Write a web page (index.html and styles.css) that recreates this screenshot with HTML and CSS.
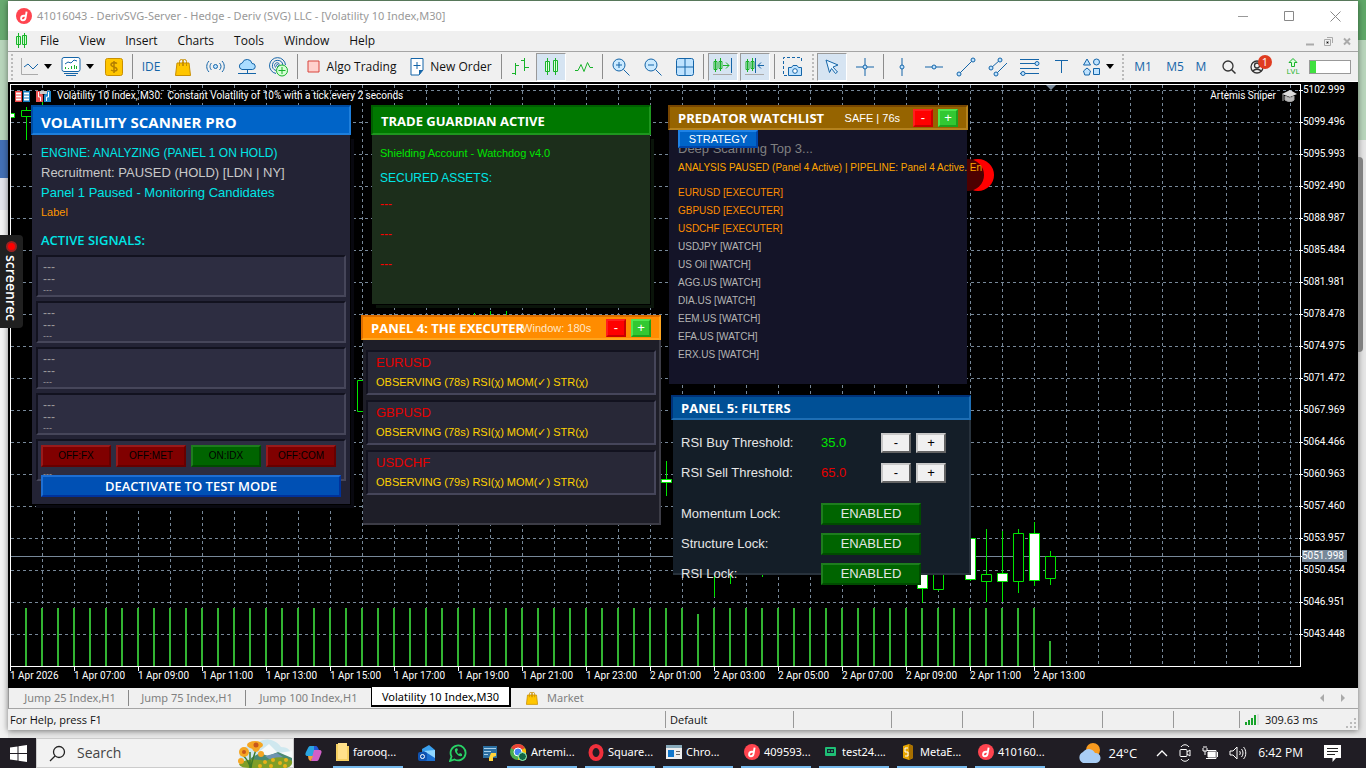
FILE: index.html
```html
<!DOCTYPE html>
<html lang="en">
<head>
<meta charset="utf-8">
<title>41016043 - DerivSVG-Server</title>
<link rel="stylesheet" href="styles.css">
</head>
<body>
<svg class="defs" width="0" height="0" aria-hidden="true">
  <symbol id="deriv" viewBox="0 0 16 16"><circle cx="8" cy="8" r="8" fill="#ff444f"/><path d="M10.600 3.600 9.500 10c-.3 1.500-1.300 2.300-2.600 2.300-1.400 0-2-1-1.800-2.200.2-1.500 1.300-2.400 2.700-2.400h2" fill="none" stroke="#fff" stroke-width="1.900"/></symbol>
  <symbol id="bag" viewBox="0 0 16 18"><path d="M2 5h12l1.500 12.500H.5z" fill="#ffc600" stroke="#c98f00"/><path d="M4.500 8V3.500a2 2 0 0 1 4 0V8M7.500 8V3.500a2 2 0 0 1 4 0V8" fill="none" stroke="#c98f00"/></symbol>
</svg>
<div class="desktop">
  <main class="window">
    <header class="titlebar">
      <svg class="logo" width="16" height="16"><use href="#deriv"/></svg>
      <h1>41016043 - DerivSVG-Server - Hedge - Deriv (SVG) LLC - [Volatility 10 Index,M30]</h1>
      <button aria-label="Minimize"><svg width="11" height="11"><path d="M0 5.500h10" stroke="#999"/></svg></button>
      <button aria-label="Maximize"><svg width="11" height="11"><path d="M.5.500h9v9h-9z" stroke="#888" fill="none"/></svg></button>
      <button aria-label="Close"><svg width="11" height="11"><path d="M.5.500l10 10M10.500.500l-10 10" stroke="#888"/></svg></button>
    </header>
    <nav class="menubar">
      <svg width="13" height="16"><path d="M3.500 0v15M1.500 3.500h4v8h-4zM9.500 0v15M7.500 2.500h4v9h-4z" fill="#cfc" stroke="#18b32a"/></svg>
      <a href="#">File</a><a href="#">View</a><a href="#">Insert</a><a href="#">Charts</a><a href="#">Tools</a><a href="#">Window</a><a href="#">Help</a>
      <div class="mdi">
        <svg width="8" height="9"><path d="M0 7.500h8" stroke="#aaa" stroke-width="2"/></svg>
        <svg width="9" height="9"><path d="M3 .5h5.500V6M.5 2.500h6v6h-6z" fill="none" stroke="#aaa"/><path d="M2.500 4.500h2v2h-2z" stroke="#aaa"/></svg>
        <svg width="8" height="9"><path d="M1 1.500l6 6M7 1.500l-6 6" stroke="#aaa" stroke-width="2"/></svg>
      </div>
    </nav>
    <div class="toolbar">
      <span class="grip"></span>
      <button class="drop" aria-label="Chart type"><svg width="18" height="18"><path d="M.5 0v16.500H17" stroke="#aaa" fill="none"/><path d="M3 9l4-3 5 5 5-5" stroke="#1565a8" fill="none"/></svg><i></i></button>
      <button class="drop" aria-label="Indicators"><svg width="20" height="20"><rect x="1" y=".5" width="18" height="14" rx="2" fill="#fff" stroke="#1565a8"/><path d="M3 16.500h14M5 18.500h10" stroke="#1565a8"/><path d="M4 7l3-2 3 1 3-3 3 1" fill="none" stroke="#1565a8"/><path d="M4.500 12v-2M7.500 12v-1M10.500 12V9M13.500 12V8M15.500 12V9" stroke="#18b32a"/></svg><i></i></button>
      <button class="tool" aria-label="Currency"><svg width="18" height="18"><rect x=".5" y=".5" width="17" height="17" rx="2" fill="#ffc600" stroke="#c98f00"/><path d="M12 5.500C10 4 6 4.500 6 6.800S12 9 12 11.200 8 13.500 6 12M9 3v12" stroke="#b37f00" fill="none" stroke-width="1.500"/></svg></button>
      <span class="sep"></span>
      <button class="tool blue">IDE</button>
      <button class="tool" aria-label="Market"><svg width="16" height="18"><use href="#bag"/></svg></button>
      <button class="tool" aria-label="Signals"><svg width="19" height="13" fill="none" stroke="#1565a8"><path d="M3 1C0 4 0 9 3 12M5.500 3c-2 2-2 5 0 7M16 1c3 3 3 8 0 11M13.500 3c2 2 2 5 0 7"/><circle cx="9.500" cy="6.500" r="2" fill="#bfe3ff"/></svg></button>
      <button class="tool" aria-label="Cloud"><svg width="18" height="16" stroke="#1565a8"><path d="M4 10.500a3.300 3.300 0 0 1 .3-6.500A5 5 0 0 1 14 4.500a3 3 0 0 1 .5 6z" fill="#aaddff"/><path d="M9.500 11v3M0 14.500h18"/></svg></button>
      <button class="tool" aria-label="VPS"><svg width="20" height="20" fill="none" stroke="#1565a8"><path d="M7 16.500A8 8 0 1 1 16.500 8M7 13.500A5.200 5.200 0 1 1 13.800 8M7 10.500a2.500 2.500 0 1 1 3.500-3"/><circle cx="8.500" cy="8.500" r="1"/><circle cx="13" cy="13.500" r="5.500" fill="#d5ffd5" stroke="#18b32a"/><path d="M13 10v7M9.500 13.500h7" stroke="#18b32a"/></svg></button>
      <span class="sep"></span>
      <button class="wide"><svg width="13" height="13"><path d="M1 1h11v11H1z" fill="#ffd0cc" stroke="#d8443c"/></svg>Algo Trading</button>
      <button class="wide order"><svg width="14" height="18"><path d="M1 .5h12V12l-4 5H1z" fill="#fff" stroke="#1565a8"/><path d="M7 4v7M3.500 7.500h7" stroke="#1565a8"/><path d="M13 12H9v5z" fill="#1565a8"/></svg>New Order</button>
      <span class="sep"></span>
      <button class="tool" aria-label="Bar chart"><svg width="18" height="18"><path d="M4.500 5v12M1 15.500h3M5 7.500h3M13.500 0v13M10 2.500h3M14 9.500h4" stroke="#18b32a"/></svg></button>
      <button class="tool on" aria-label="Candlesticks"><svg width="15" height="18"><path d="M3.500 0v17M11.500 0v17M1.500 3.500h4v10h-4zM9.500 2.500h4v11h-4z" fill="#dfd" stroke="#18b32a"/></svg></button>
      <button class="tool" aria-label="Line chart"><svg width="18" height="12"><path d="M0 9.500h3l3-6 3 7 3.500-9 2.500 5h3" fill="none" stroke="#18b32a"/></svg></button>
      <span class="sep"></span>
      <button class="tool" aria-label="Zoom in"><svg width="18" height="18" stroke="#1565a8"><circle cx="7" cy="7" r="6" fill="#cbeaff"/><path d="M11.500 11.500l6 6M7 4v6M4 7h6"/></svg></button>
      <button class="tool" aria-label="Zoom out"><svg width="18" height="18" stroke="#1565a8"><circle cx="7" cy="7" r="6" fill="#cbeaff"/><path d="M11.500 11.500l6 6M4 7h6"/></svg></button>
      <button class="tool" aria-label="Tile"><svg width="18" height="18" stroke="#1565a8"><rect x=".5" y=".5" width="17" height="17" rx="2" fill="#bfe3ff"/><path d="M9 0v18M0 9h18"/></svg></button>
      <span class="sep"></span>
      <button class="tool on" aria-label="Auto scroll"><svg width="20" height="18"><path d="M2.500 1v13M7.500 0v13M1 3.500h3v8H1zM6 3.500h3v7H6zM10 7.500h6M13 4.500l3 3-3 3" fill="none" stroke="#18b32a"/><path d="M18.500 0v15" stroke="#1565a8"/><path d="M0 16.500h19" stroke="#aaa"/></svg></button>
      <button class="tool on" aria-label="Chart shift"><svg width="20" height="18"><path d="M2.500 1v13M7.500 0v13M1 3.500h3v8H1zM6 3.500h3v7H6z" fill="none" stroke="#18b32a"/><path d="M10.500 0v15M19 7.500h-6M16 4.500l-3 3 3 3" fill="none" stroke="#1565a8"/><path d="M0 16.500h19" stroke="#aaa"/></svg></button>
      <span class="sep"></span>
      <button class="tool" aria-label="Screenshot"><svg width="20" height="20" fill="none" stroke="#1565a8"><path d="M4 18.500H.5V.5h18V6" stroke-dasharray="3 2"/><path d="M5.500 10.500h3l1.500-2h4l1.500 2h3v8h-13z" fill="#bfe3ff"/><circle cx="12" cy="14" r="2.300" fill="#fff"/></svg></button>
      <span class="grip"></span>
      <button class="tool on" aria-label="Cursor"><svg width="14" height="16"><path d="M1 1l12 5-5 2 4.500 5-2 1.500-4-5-2 4z" fill="#e3f3ff" stroke="#1565a8"/></svg></button>
      <button class="tool" aria-label="Crosshair"><svg width="18" height="18" stroke="#1565a8"><path d="M9 0v18M0 9h18"/><circle cx="9" cy="9" r="2" fill="#bfe3ff"/></svg></button>
      <span class="sep"></span>
      <button class="tool" aria-label="Vertical line"><svg width="6" height="18" stroke="#1565a8"><path d="M3 0v18"/><circle cx="3" cy="9" r="2" fill="#bfe3ff"/></svg></button>
      <button class="tool" aria-label="Horizontal line"><svg width="18" height="6" stroke="#1565a8"><path d="M0 3h18"/><circle cx="9" cy="3" r="2" fill="#bfe3ff"/></svg></button>
      <button class="tool" aria-label="Trend line"><svg width="20" height="20" stroke="#1565a8" fill="#bfe3ff"><path d="M3 17L17 3"/><circle cx="3" cy="17" r="2"/><circle cx="17" cy="3" r="2"/></svg></button>
      <button class="tool" aria-label="Channel"><svg width="20" height="20" stroke="#1565a8" fill="#bfe3ff"><path d="M3 11l9-8M8 17L19 6"/><circle cx="3" cy="11" r="2"/><circle cx="12" cy="3" r="2"/><circle cx="8" cy="17" r="2"/></svg></button>
      <button class="tool" aria-label="Fibonacci"><svg width="20" height="18" stroke="#1565a8" fill="#bfe3ff"><path d="M0 1.500h19M0 5.500h19M0 10.500h19M0 15.500h19"/><circle cx="17" cy="5.500" r="2"/><circle cx="3" cy="15.500" r="2"/></svg></button>
      <button class="tool" aria-label="Text"><svg width="14" height="14"><path d="M0 .5h13M6.500 0v13" stroke="#1565a8"/></svg></button>
      <button class="drop" aria-label="Shapes"><svg width="18" height="18" stroke="#1565a8" fill="#bfe3ff"><path d="M4 1l3.500 6h-7zM4 10l3.500 3-1.300 4H1.800L.5 13zM10.500 10.500h6v6h-6z"/><circle cx="13.500" cy="4" r="3"/></svg><i></i></button>
      <span class="grip"></span>
      <button class="tool blue">M1</button><button class="tool blue">M5</button><button class="tool blue cut">M</button>
      <button class="tool find" aria-label="Search"><svg width="14" height="14" fill="none" stroke="#333"><circle cx="6" cy="6" r="5" stroke-width="1.300"/><path d="M9.500 9.500l4 4" stroke-width="1.500"/></svg></button>
      <button class="tool account" aria-label="Account"><svg width="14" height="14" fill="none" stroke="#333" stroke-width="1.300"><circle cx="7" cy="7" r="6"/><circle cx="7" cy="5.500" r="2.500"/><path d="M3 11.500c1-3 7-3 8 0"/></svg><b>1</b></button>
      <button class="tool lvl"><svg width="10" height="9"><path d="M5 .5l4 4H6.500v4h-3v-4H1z" fill="#dfd" stroke="#18b32a"/></svg>LVL</button>
      <span class="level"><span></span></span>
    </div>

    <section class="chart">
      <div class="plot">
        <svg class="drawing" width="100%" height="100%">
          <defs>
            <pattern id="gh" width="6" height="32" patternUnits="userSpaceOnUse" y="5"><path d="M0 .5h3" stroke="#778899"/></pattern>
            <pattern id="gv" width="32" height="6" patternUnits="userSpaceOnUse" x="31"><path d="M.5 0v3" stroke="#778899"/></pattern>
            <pattern id="vol" width="16" height="6" patternUnits="userSpaceOnUse" x="9"><path d="M1 0v6" stroke="#32b432" stroke-width="2"/></pattern>
          </defs>
          <rect width="100%" height="100%" fill="url(#gh)"/>
          <rect width="100%" height="100%" fill="url(#gv)"/>
          <g transform="translate(-11 -85)">
            <rect x="18" y="608" width="672" height="58" fill="url(#vol)"/>
            <rect x="706" y="608" width="336" height="58" fill="url(#vol)"/>
            <path d="M698 614v52M1050 641v25" stroke="#32b432" stroke-width="2"/>
            <path d="M10 556.500h1300" stroke="#778899"/>
            <g fill="#000" stroke="#00e600">
              <path d="M26.500 107v33M42.500 100v6M474.500 313v3M490.500 311v5M506.500 311v5M666.500 461v35M714.500 570v27M730.500 570v14M762.500 570v7M922.500 570v33M938.500 570v21M970.500 530v51M986.500 529v73M1002.500 531v71M1018.500 529v64M1034.500 522v64M1050.500 551v34"/>
              <path d="M21.500 110.500h10v6h-10zM357.500 380.500h10v31h-10zM933.500 556.500h10v33h-10zM981.500 574.500h10v7h-10zM1013.500 533.500h10v48h-10zM1045.500 556.500h10v22h-10z"/>
              <path fill="#fff" d="M8.500 113.500h6v4h-6zM661.500 479.500h10v3h-10zM917.500 560.500h10v28h-10zM965.500 538.500h10v41h-10zM997.500 573.500h10v8h-10zM1029.500 533.500h10v47h-10z"/>
            </g>
            <path d="M1046 85h10l-5 5z" fill="#778899"/>
            <circle cx="978" cy="175" r="16" fill="#f00"/><circle cx="968" cy="175" r="16" fill="#4d0000"/>
          </g>
        </svg>
        <div class="caption">
          <svg width="15" height="11"><path d="M0 0h7v11H0z" fill="#e44"/><path d="M8 0h7v11H8z" fill="#17b"/><path d="M1 2.500h5M1 5.500h5M1 8.500h5M9 2.500h5M9 5.500h5M9 8.500h5" stroke="#fff" stroke-width="2"/></svg>
          <svg width="15" height="11"><path d="M0 0h4l3 4v7H0z" fill="#e55"/><path d="M11 0h4v11H8V4z" fill="#28c"/><path d="M4 0h7v3H4z" fill="#ccc"/><path d="M2.500 1v5h2v4M12.500 1v5h-2v4" stroke="#fff" fill="none"/></svg>
          <span>Volatility 10 Index, M30:&nbsp; Constant Volatility of 10% with a tick every 2 seconds</span>
          <span class="expert">Artemis Sniper</span>
          <svg width="15" height="12"><path d="M0 4l8-4 7 4-7 3z" fill="#ddd"/><path d="M3 6v4c3 2 7 2 9 0V6L8 8zM1 4v7" fill="#bbb" stroke="#aaa"/></svg>
        </div>

        <section class="panel scanner">
          <h2>VOLATILITY SCANNER PRO</h2>
          <div class="body">
            <p class="engine">ENGINE: ANALYZING (PANEL 1 ON HOLD)</p>
            <p class="recruit">Recruitment: PAUSED (HOLD) [LDN | NY]</p>
            <p class="monitor">Panel 1 Paused - Monitoring Candidates</p>
            <p class="label">Label</p>
            <h3>ACTIVE SIGNALS:</h3>
            <div class="slot"><p>---</p><p>---</p><p>---</p></div>
            <div class="slot"><p>---</p><p>---</p><p>---</p></div>
            <div class="slot"><p>---</p><p>---</p><p>---</p></div>
            <div class="slot"><p>---</p><p>---</p><p>---</p></div>
            <div class="slot"><p></p><p></p><p>---</p></div>
            <div class="over">
              <div class="modes"><button>OFF:FX</button><button>OFF:MET</button><button class="go">ON:IDX</button><button>OFF:COM</button></div>
              <button class="deactivate">DEACTIVATE TO TEST MODE</button>
            </div>
          </div>
        </section>

        <section class="panel guardian">
          <h2>TRADE GUARDIAN ACTIVE</h2>
          <div class="body">
            <p class="shield">Shielding Account - Watchdog v4.0</p>
            <p class="secured">SECURED ASSETS:</p>
            <p>---</p><p>---</p><p>---</p>
          </div>
        </section>

        <section class="panel executer">
          <header><h2>PANEL 4: THE EXECUTER</h2><span>Window: 180s</span><button class="minus">-</button><button class="plus">+</button></header>
          <div class="body">
            <div class="slot"><h3>EURUSD</h3><p>OBSERVING (78s) RSI(χ) MOM(✓) STR(χ)</p></div>
            <div class="slot"><h3>GBPUSD</h3><p>OBSERVING (78s) RSI(χ) MOM(✓) STR(χ)</p></div>
            <div class="slot"><h3>USDCHF</h3><p>OBSERVING (79s) RSI(χ) MOM(✓) STR(χ)</p></div>
          </div>
        </section>

        <section class="panel predator">
          <header><h2>PREDATOR WATCHLIST</h2><span>SAFE | 76s</span><button class="minus">-</button><button class="plus">+</button></header>
          <div class="body">
            <button class="strategy">STRATEGY</button>
            <p class="deep">Deep Scanning Top 3...</p>
            <p class="paused">ANALYSIS PAUSED (Panel 4 Active) | PIPELINE: Panel 4 Active. En</p>
            <ul>
              <li class="hot">EURUSD [EXECUTER]</li><li class="hot">GBPUSD [EXECUTER]</li><li class="hot">USDCHF [EXECUTER]</li>
              <li>USDJPY [WATCH]</li><li>US Oil [WATCH]</li><li>AGG.US [WATCH]</li><li>DIA.US [WATCH]</li><li>EEM.US [WATCH]</li><li>EFA.US [WATCH]</li><li>ERX.US [WATCH]</li>
            </ul>
          </div>
        </section>

        <section class="panel filters">
          <h2>PANEL 5: FILTERS</h2>
          <div class="body">
            <div class="row"><span>RSI Buy Threshold:</span><output class="buy">35.0</output><button>-</button><button>+</button></div>
            <div class="row"><span>RSI Sell Threshold:</span><output class="sell">65.0</output><button>-</button><button>+</button></div>
            <div class="row lock"><span>Momentum Lock:</span><button class="enabled">ENABLED</button></div>
            <div class="row"><span>Structure Lock:</span><button class="enabled">ENABLED</button></div>
            <div class="row"><span>RSI Lock:</span><button class="enabled">ENABLED</button></div>
          </div>
        </section>
      </div>
      <ol class="prices">
        <li>5102.999</li><li>5099.496</li><li>5095.993</li><li>5092.490</li><li>5088.987</li><li>5085.484</li><li>5081.981</li><li>5078.478</li><li>5074.975</li><li>5071.472</li><li>5067.969</li><li>5064.466</li><li>5060.963</li><li>5057.460</li><li>5053.957</li><li>5050.454</li><li>5046.951</li><li>5043.448</li>
        <li class="current">5051.998</li>
      </ol>
      <ol class="times">
        <li>1 Apr 2026</li><li>1 Apr 07:00</li><li>1 Apr 09:00</li><li>1 Apr 11:00</li><li>1 Apr 13:00</li><li>1 Apr 15:00</li><li>1 Apr 17:00</li><li>1 Apr 19:00</li><li>1 Apr 21:00</li><li>1 Apr 23:00</li><li>2 Apr 01:00</li><li>2 Apr 03:00</li><li>2 Apr 05:00</li><li>2 Apr 07:00</li><li>2 Apr 09:00</li><li>2 Apr 11:00</li><li>2 Apr 13:00</li>
      </ol>
    </section>

    <nav class="tabs">
      <a href="#">Jump 25 Index,H1</a><a href="#">Jump 75 Index,H1</a><a href="#" class="last">Jump 100 Index,H1</a><a href="#" class="active">Volatility 10 Index,M30</a>
      <a href="#" class="market"><svg width="12" height="14"><use href="#bag"/></svg>Market</a>
      <span class="arrows"><svg width="4" height="8"><path d="M4 0v8L0 4z" fill="#aaa"/></svg><svg width="4" height="8"><path d="M0 0v8l4-4z" fill="#aaa"/></svg></span>
    </nav>
    <footer class="status">
      <span class="help">For Help, press F1</span><span class="profile">Default</span><span class="s98"></span><span class="s71"></span><span class="s71"></span><span class="s68"></span><span class="s71"></span><span class="s66"></span>
      <span class="ping"><svg width="14" height="11"><path d="M1 11V8M4 11V6M7 11V4M10 11V1" stroke="#18a32a" stroke-width="2"/><path d="M13 11V0" stroke="#ccc"/></svg>309.63 ms</span>
      <svg class="resize" width="10" height="10"><path d="M8 0h2v2H8zM4 4h2v2H4zM8 4h2v2H8zM0 8h2v2H0zM4 8h2v2H4zM8 8h2v2H8z" fill="#bbb"/></svg>
    </footer>
  </main>
  <button class="recorder"><i></i>screenrec</button>
  <span class="scroll"></span>
</div>

<footer class="taskbar">
  <button class="start" aria-label="Start"><svg width="17" height="17"><path d="M0 2.500L7.500 1.500V8H0zM8.500 1.300L17 0v8H8.500zM0 9h7.500v6.500L0 14.500zM8.500 9H17v8l-8.500-1.300z" fill="#fff"/></svg></button>
  <div class="search">
    <svg width="17" height="17" fill="none" stroke="#222" stroke-width="1.300"><circle cx="10" cy="7" r="5.500"/><path d="M6 11L1 16"/></svg>
    <input type="text" placeholder="Search" aria-label="Search">
    <svg width="56" height="29">
      <path d="M3 20C0 6 18 6 22 3c8-5 17-2 22 5 8 0 11 5 11 10v8l-8 3H10z" fill="#cfe8ef"/>
      <path d="M22 13l10-8 9 9 14-2v7H22z" fill="#f7fafa"/><path d="M14 19l9-5 8 3 10-4 14 6v5H14z" fill="#4a8a74"/><path d="M28 17l12-3 6 4-11 4z" fill="#6e94b0"/>
      <path d="M2 25c8-7 20-4 27-3 10-6 20-4 26 0 1 5-4 7-7 7H14C7 29 3 28 2 25z" fill="#7f9e28"/>
      <g fill="#e8b21a"><circle cx="28" cy="23" r="2"/><circle cx="36" cy="21" r="2"/><circle cx="43" cy="24" r="2"/><circle cx="49" cy="21" r="2"/><circle cx="34" cy="27" r="2"/><circle cx="48" cy="27" r="2"/><circle cx="23" cy="27" r="2"/></g>
      <path d="M13 13v16M19 9c-1 8-4 10-5 20M6 16c3 4 6 6 7 12" stroke="#3d7a2a" fill="none" stroke-width="1.500"/>
      <g fill="#f5a623"><ellipse cx="18" cy="6" rx="8" ry="4"/><ellipse cx="19" cy="8" rx="4" ry="5"/><circle cx="7" cy="13" r="5"/><circle cx="4" cy="22" r="3"/><circle cx="24" cy="15" r="3"/></g>
      <g fill="#c8571b"><circle cx="19" cy="6" r="2.500"/><circle cx="7" cy="13" r="2"/></g>
    </svg>
  </div>
  <button class="pin" aria-label="Copilot"><svg width="17" height="17"><path d="M5 1h6l-3 10H3C0 11 0 9 1 7l2-4c.5-1 1-2 2-2z" fill="#2aa5e0"/><path d="M9 1h2c1 0 1.500 1 2 2l1 2H9z" fill="#2558d8"/><path d="M9 5h5c3 0 3 2 2 4l-2 5c-.5 1-1 2-2 2H6z" fill="#d060c8"/><path d="M3 11h5l-2 5c-1 0-2-1-2.500-2z" fill="#f0a03a"/></svg></button>
  <button class="task"><svg width="13" height="18"><path d="M0 1h7l1 2h5v15H0z" fill="#f5cf62"/><path d="M2 0h9v16H2z" fill="#ffe08a"/></svg>farooq...</button>
  <button class="pin" aria-label="Outlook"><svg width="17" height="17"><path d="M4 4l7-4 6 5v10H5z" fill="#3aa0ee"/><path d="M5 6h12v10H5z" fill="#1b6fd0"/><path d="M6 6l11 7V5z" fill="#8fd6ff"/><rect y="7" width="9" height="9" rx="2" fill="#0f52b0"/><circle cx="4.500" cy="11.500" r="2" fill="none" stroke="#fff"/></svg></button>
  <button class="pin" aria-label="WhatsApp"><svg width="18" height="18"><path d="M1 17l1.500-4.500A7.500 7.500 0 1 1 5.500 15.500z" fill="none" stroke="#28d366" stroke-width="1.800"/><path d="M6 5c-1 3 3 8 7 7l0-2-2-1-1 1c-1 0-2-2-2-3l1-1-1-2z" fill="#28d366"/></svg></button>
  <button class="pin" aria-label="IDLE"><svg width="16" height="17"><path d="M1 1h14v12H1z" fill="#2b6ea0"/><path d="M2 3.500h12M2 6.500h7M2 9.500h4" stroke="#a9d0ea"/><path d="M9 8h5v3l-3 1v4H7v-3z" fill="#ffd43b"/></svg></button>
  <button class="task"><svg width="17" height="17"><circle cx="8" cy="8" r="8" fill="#4caf50"/><path d="M8 8L1 4a8 8 0 0 1 14 0z" fill="#ea4335"/><path d="M8 8l7-4a8 8 0 0 1-7 12z" fill="#fbbc05"/><circle cx="8" cy="8" r="4" fill="#4285f4" stroke="#fff"/><circle cx="12.500" cy="12.500" r="4" fill="#164" stroke="#9fb"/></svg>Artemi...</button>
  <button class="task"><svg width="16" height="17"><ellipse cx="8" cy="8.500" rx="5.500" ry="6.500" fill="none" stroke="#f0303c" stroke-width="4"/></svg>Square...</button>
  <button class="task"><svg width="16" height="14"><path d="M0 0h16v14H0z" fill="#eee"/><path d="M0 0h16v3H0z" fill="#8ab"/><path d="M2 5h6v7H2z" fill="#17c"/><path d="M10 6.500h4M10 9.500h4" stroke="#666"/></svg>Chro...</button>
  <button class="task"><svg width="16" height="16"><use href="#deriv"/></svg>409593...</button>
  <button class="task"><svg width="16" height="12"><rect x="3" y="1" width="11" height="9" rx="1" fill="#1fbf75"/><path d="M5 3h7v4H5z" fill="#123"/><path d="M7 4v2M10 4v2" stroke="#4f8"/></svg>test24....</button>
  <button class="task"><svg width="16" height="16"><path d="M3 2l6-2 4 2v12l-4 2-6-2z" fill="#e8a500"/><path d="M9 0l4 2v12l-4 2z" fill="#a87000"/><path d="M8 4H5v4h3v4H5" stroke="#fff" fill="none"/></svg>MetaE...</button>
  <button class="task"><svg width="16" height="16"><use href="#deriv"/></svg>410160...</button>
  <div class="tray">
    <svg width="26" height="22"><circle cx="17" cy="8" r="7" fill="#f79a1f"/><path d="M7 21a6 6 0 0 1 0-11 7 7 0 0 1 12 1 5 5 0 0 1 1 10z" fill="#a9cdf5"/></svg>
    <span class="temp">24°C</span>
    <svg width="12" height="8"><path d="M1 7l5-5 5 5" fill="none" stroke="#fff" stroke-width="1.300"/></svg>
    <svg width="12" height="18" fill="none" stroke="#fff"><path d="M2 3C4 0 8 0 10 3M2 15c2 3 6 3 8 0"/><rect x="1" y="5.500" width="7" height="7" rx="1"/><path d="M8 8l3-2v6l-3-2"/></svg>
    <svg width="16" height="14" fill="none" stroke="#fff"><path d="M5 4.500h9v8H4M15.500 6v5"/><path d="M6 6h7v5H6z" fill="#fff"/><path d="M1 2v3h4V2M2 0v2M4 0v2M3 5v4"/></svg>
    <svg width="18" height="14" fill="none" stroke="#fff"><path d="M1 5h3l4-4v12L4 9H1zM10.500 5c1 1 1 3 0 4M12.500 3c2 2 2 6 0 8M14.500 1c3 3 3 9 0 12"/></svg>
    <time>6:42 PM</time>
    <svg width="17" height="17"><path d="M0 0h17v13h-5l-3.500 4v-4H0z" fill="#fff"/><path d="M3 3.500h11M3 6.500h11M3 9.500h8" stroke="#222"/></svg>
  </div>
</footer>
</body>
</html>
```
FILE: styles.css
```css
* { box-sizing: border-box; }
body {
  margin: 0;
  height: 100vh;
  display: flex;
  flex-direction: column;
  overflow: hidden;
  font: 12px/16px "Open Sans", sans-serif;
  color: #111;
}
h1, h2, h3, p, ul, ol { margin: 0; padding: 0; font-size: inherit; font-weight: normal; list-style: none; }
button { margin: 0; padding: 0; border: 0; background: none; font: inherit; color: inherit; }
a { color: inherit; text-decoration: none; }
svg { flex: none; display: block; }
.defs { position: absolute; }

.desktop {
  flex: 1;
  min-height: 0;
  display: flex;
  position: relative;
  padding: 1px 8px 8px;
  background: linear-gradient(#68ab70 0 40px, #b9d6bc 40px 140px, #4370b5 140px 178px, #e2e4ec 178px 210px, #f2f2f2 210px) left / 8px 100% no-repeat,
    linear-gradient(#5fa868 0 40px, #b9d6bc 40px 140px, #e6e6e6 140px) right / 8px 100% no-repeat,
    linear-gradient(#68906c 0 1px, #e8e8e8 1px);
}
.scroll { position: absolute; right: 3px; top: 157px; width: 5px; height: 195px; background: #808080; border-radius: 0 4px 4px 0; }
.window { flex: 1; min-width: 0; display: flex; flex-direction: column; background: #f0f0f0; box-shadow: 0 1px 6px rgba(0, 0, 0, .5); }

.titlebar { display: flex; align-items: center; height: 30px; padding-left: 8px; background: #fff; color: #999; }
.titlebar h1 { flex: 1; margin-left: 5px; font: 11px/16px "Noto Sans", sans-serif; }
.titlebar button { width: 46px; display: flex; justify-content: center; }
.menubar { display: flex; align-items: center; height: 21px; padding-left: 7px; border-bottom: 1px solid #a5a5a5; }
.menubar a { margin-left: 12px; margin-right: 8px; }
.mdi { display: flex; gap: 10px; margin-left: auto; padding-right: 7px; }

.toolbar { display: flex; align-items: center; height: 30px; border-bottom: 1px solid #fff; overflow: hidden; }
.toolbar button, .level, .sep, .grip { flex: none; display: flex; align-items: center; justify-content: center; height: 28px; }
.toolbar .tool { width: 32px; }
.toolbar .on { width: 30px; margin-right: 2px; background: #d6e4f2; border: 1px solid #fff; border-top-color: #999; border-left-color: #999; }
.toolbar .drop { width: 41px; gap: 5px; }
.toolbar .sep + .on { margin-left: 2px; }
.drop i { border: 4px solid transparent; border-top: 5px solid #000; border-bottom: 0; }
.sep { width: 5px; }
.sep::before { content: ""; width: 1px; height: 25px; background: #8c8c8c; }
.grip { width: 8px; }
.grip::before { content: ""; height: 26px; border-left: 2px dotted #bbb; }
.blue { color: #1565a8; }
.toolbar .wide { gap: 7px; width: 103px; }
.toolbar .order { width: 96px; gap: 6px; }
.toolbar .cut { width: 20px; }
.toolbar .find { margin-left: auto; }
.account b { align-self: flex-start; width: 14px; height: 14px; margin-left: -6px; margin-top: 2px; border-radius: 50%; background: #e03c20; color: #fff; font: 11px/14px "Open Sans", sans-serif; }
.toolbar .lvl { flex-direction: column; color: #18b32a; font-size: 8px; line-height: 8px; }
.toolbar .level { width: 42px; height: 14px; margin-right: 7px; border: 1px solid #999; background: #fff; justify-content: flex-start; }
.level span { width: 6px; height: 12px; background: #3fe03f; }

.chart { flex: 1; min-height: 0; display: grid; grid-template: 1fr 21px / 1fr 57px; padding: 2px 0 0 2px; background: #000; color: #fff; font: 10px/14px Roboto, sans-serif; }
.plot { position: relative; border: 1px solid #fff; }
.drawing { position: absolute; }
.caption { position: relative; display: flex; align-items: center; gap: 6px; padding: 4px 3px 0 4px; line-height: 14px; white-space: nowrap; }
.expert { margin-left: auto; }
.prices li { height: 32px; line-height: 14px; display: flex; align-items: center; }
.prices { position: relative; height: 576px; margin-top: -10px; }
.prices li::before { content: ""; width: 4px; margin-left: -2px; border-top: 1px solid #fff; }
.prices .current { position: absolute; top: 476px; left: 1px; width: 45px; height: 12px; line-height: 12px; background: #778899; }
.prices .current::before { width: 2px; }
.times { display: flex; white-space: nowrap; line-height: 16px; }
.times li { flex: none; width: 64px; padding-top: 1px; position: relative; }
.times li::before { content: ""; position: absolute; top: -1px; left: 0; height: 5px; border-left: 1px solid #fff; }

.panel { position: absolute; font: 13px/20px "Liberation Sans", sans-serif; white-space: nowrap; }
.panel h2 { font: bold 13px/18px "Open Sans", sans-serif; }
.panel > h2, .panel > header { border: 2px solid; }
.panel header { display: flex; align-items: center; height: 25px; padding: 0 8px; font-size: 11px; }
.panel header span { margin-left: auto; margin-right: 8px; }
.panel header button { width: 20px; height: 18px; margin-left: 5px; border: 2px solid; font-size: 13px; line-height: 14px; }
.minus { background: #f00; border-color: #ff1e1e #c80000 #c80000 #ff1e1e !important; }
.plus { background: #32c832; border-color: #50e650 #1ea01e #1ea01e #50e650 !important; }
.slot { border: 2px solid; border-color: #12121f #46465a #46465a #12121f; background: #2d2d41; }

.scanner { left: 20px; top: 20px; width: 320px; }
.scanner > h2 { height: 30px; padding-left: 8px; font-size: 15px; line-height: 30px; background: #0064c8; border-color: #004ba0 #1e7fdc #1e7fdc #004ba0; }
.scanner .body { margin: 0 1px; height: 369px; padding: 8px 4px 0; background: #232335; box-shadow: 1px 1px #000, 4px 4px #08080f; }
.scanner .body > p, .scanner h3 { padding-left: 5px; }
.engine { font-size: 12px; color: #00e6e6; }
.recruit { color: #c8c8c8; }
.monitor { color: #00e6e6; }
.label { font-size: 11px; line-height: 18px; color: #ff9600; }
.scanner h3 { margin: 8px 0 4px; font: 600 13px/22px "Open Sans", sans-serif; color: #00e6e6; }
.scanner .slot { height: 42px; margin-bottom: 4px; padding: 4px 0 0 5px; color: #999; font-size: 12px; line-height: 12px; }
.scanner .slot p { height: 12px; }
.scanner .slot p:last-child { font-size: 9px; line-height: 10px; }
.over { position: relative; margin-top: -40px; padding: 0 5px; }
.modes { display: flex; gap: 5px; }
.modes button { width: 70px; height: 22px; border: 2px solid; border-color: #991a1a #660000 #660000 #991a1a; background: #800000; color: #000; font-size: 10px; line-height: 16px; }
.modes .go { border-color: #1e7d1e #004b00 #004b00 #1e7d1e; background: #006400; }
.deactivate { width: 300px; height: 22px; margin-top: 8px; border: 2px solid; border-color: #1e6ed2 #00329b #00329b #1e6ed2; background: #0050b4; font: 600 13px/18px "Open Sans", sans-serif; display: block; }

.guardian { left: 360px; top: 20px; width: 280px; }
.guardian > h2 { height: 30px; padding-left: 8px; line-height: 28px; background: #007800; border-color: #005f00 #1e961e #1e961e #005f00; }
.guardian .body { margin: 0 1px; height: 169px; padding: 8px; background: #1c2e1b; box-shadow: 1px 1px #000, 4px 4px #0a140a; color: #f00; font-size: 12px; line-height: 30px; }
.guardian .shield { font-size: 11px; line-height: 20px; color: #00e600; }
.guardian .secured { margin-bottom: -4px; color: #00e6e6; }

.executer { left: 350px; top: 230px; width: 300px; }
.executer header { background: #ff8c00; border-color: #dc6e00 #ffa51e #ffa51e #dc6e00; }
.executer header span { margin-left: -2px; margin-right: auto; color: #ffe8c8; }
.executer .body { margin-left: 2px; height: 185px; padding: 10px 3px 0; background: #1e1e28; border: 2px solid #3c3c46; border-width: 0 2px 2px 0; }
.executer .slot { height: 45px; margin-bottom: 5px; padding-left: 8px; background: #282837; }
.executer h3 { line-height: 22px; color: #e60000; }
.executer .slot p { font-size: 11px; line-height: 16px; color: #ffd200; }

.predator { left: 657px; top: 20px; width: 300px; }
.predator header { background: #966400; border-color: #784600 #b4821e #b4821e #784600; }
.predator .body { margin: 0 1px; height: 254px; padding-left: 9px; background: #141428; font-size: 10px; }
.strategy { position: absolute; width: 80px; height: 18px; border: 2px solid; border-color: #1e82e6 #0046aa #0046aa #1e82e6; background: #0064c8; font-size: 11px; line-height: 14px; }
.deep { padding-top: 9px; font-size: 13px; color: #808080; }
.paused { line-height: 18px; color: #ffa500; }
.predator ul { padding-top: 7px; line-height: 18px; color: #b4b4b4; }
.predator .hot { color: #ff8c00; }

.filters { left: 660px; top: 310px; width: 300px; }
.filters > h2 { height: 25px; padding-left: 8px; line-height: 23px; background: #005096; border-color: #003278 #1e6eb4 #1e6eb4 #003278; }
.filters .body { margin-left: 2px; height: 155px; padding: 8px; background: #141e28; border: 2px solid #28323c; border-width: 0 2px 2px 0; }
.row { display: flex; align-items: center; height: 30px; color: #e6e6e6; }
.lock { margin-top: 11px; }
.row span { width: 140px; }
.row output { width: 60px; }
.buy { color: #00e600; }
.sell { color: #e60000; }
.row button { width: 30px; height: 20px; margin-right: 5px; border: 2px solid; border-color: #c8c8c8 #646464 #646464 #c8c8c8; background: #f0f0f0; color: #000; line-height: 16px; }
.row .enabled { width: 100px; height: 22px; border-color: #1e7d1e #004b00 #004b00 #1e7d1e; background: #006400; color: #e6e6e6; }

.tabs { display: flex; height: 21px; padding-left: 3px; color: #808080; border-left: 1px solid #999; border-bottom: 1px solid #a5a5a5; font: 11px/18px "Noto Sans", sans-serif; white-space: nowrap; }
.tabs a { flex: none; width: 117px; text-align: center; border-right: 1px solid #888; margin: 2px 0; line-height: 16px; }
.tabs .last { width: 125px; border: 0; }
.tabs .active { width: 140px; margin: -1px 0 1px; line-height: 19px; background: #fff; color: #000; border: 1px solid #000; border-width: 0 2px 2px 1px; }
.tabs .market { display: flex; align-items: center; gap: 9px; padding-left: 15px; border: 0; }
.arrows { margin-left: auto; display: flex; align-items: center; gap: 17px; padding-right: 13px; }
.status { display: flex; height: 21px; padding: 2px; line-height: 18px; font-size: 11px; position: relative; }
.status span { border-right: 1px solid #999; }
.status .help { flex: 1; }
.status .profile { width: 128px; padding-left: 4px; }
.s98 { width: 98px; } .s71 { width: 71px; } .s68 { width: 69px; } .s66 { width: 66px; }
.status .ping { display: flex; align-items: center; gap: 6px; width: 116px; padding-left: 5px; border: 0; }
.resize { position: absolute; right: 2px; bottom: 2px; }

.recorder { position: absolute; left: 0; top: 235px; width: 23px; height: 93px; padding: 6px 0; display: flex; align-items: center; gap: 3px; writing-mode: vertical-rl; background: #202020; border-radius: 0 4px 4px 0; color: #fff; font-size: 14px; font-weight: 600; line-height: 23px; }
.recorder i { width: 11px; height: 11px; border: 2px solid #922; border-radius: 50%; background: #f00; }

.taskbar { display: flex; height: 30px; background: #201d24; color: #fff; }
.taskbar button { flex: none; display: flex; align-items: center; }
.start { width: 36px; justify-content: center; }
.search { display: flex; align-items: center; width: 258px; padding-left: 12px; background: #f2f2f2; border: 1px solid #ccc; }
.search input { flex: 1; min-width: 0; padding: 0 0 0 11px; border: 0; background: none; font: 14px/20px "Open Sans", sans-serif; }
.search input::placeholder { color: #444; }
.pin { width: 32px; justify-content: center; }
.taskbar .search + .pin { width: 38px; }
.taskbar .task { width: 70px; margin: 0 7px 0 1px; padding-left: 3px; gap: 4px; border-bottom: 2px solid #76b9ed; white-space: nowrap; font: 11px/16px "Noto Sans", sans-serif; }
.tray { display: flex; align-items: center; gap: 11px; margin-left: auto; padding-right: 25px; white-space: nowrap; }
.temp { font-size: 13px; margin: 0 8px 0 -4px; }
.tray time { margin-right: 10px; }
```
